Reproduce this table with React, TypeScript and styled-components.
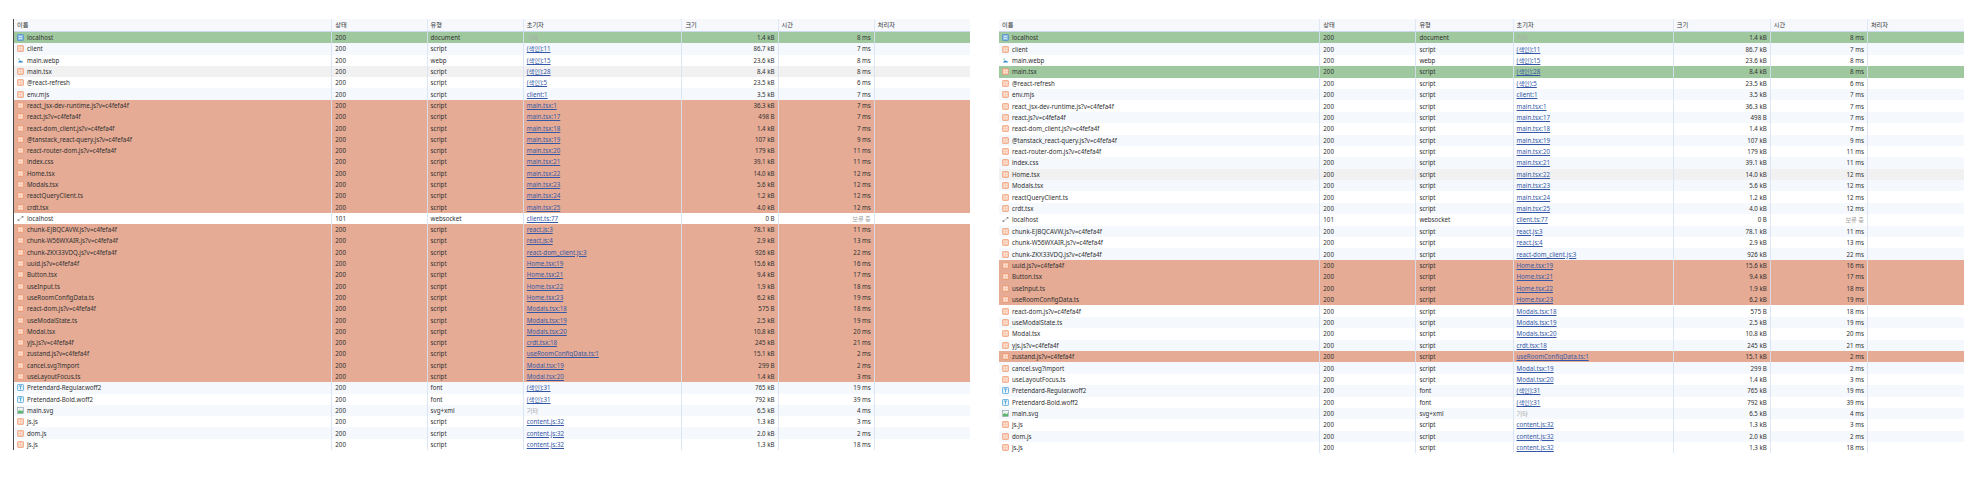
import React from 'react';
import styled, { createGlobalStyle } from 'styled-components';

type Kind = 'doc' | 'script' | 'img' | 'ws' | 'font' | 'svg';
type Tone = 'plain' | 'green' | 'orange' | 'hover';

interface Req {
  name: string;
  status: string;
  type: string;
  initiator: string;
  size: string;
  time: string;
  kind: Kind;
}

const s = (name: string, initiator: string, size: string, time: string): Req => ({
  name,
  status: '200',
  type: 'script',
  initiator,
  size,
  time,
  kind: 'script',
});

const requests: Req[] = [
  { name: 'localhost', status: '200', type: 'document', initiator: '기타', size: '1.4 kB', time: '8 ms', kind: 'doc' },
  s('client', '(색인):11', '86.7 kB', '7 ms'),
  { name: 'main.webp', status: '200', type: 'webp', initiator: '(색인):15', size: '23.6 kB', time: '8 ms', kind: 'img' },
  s('main.tsx', '(색인):28', '8.4 kB', '8 ms'),
  s('@react-refresh', '(색인):5', '23.5 kB', '6 ms'),
  s('env.mjs', 'client:1', '3.5 kB', '7 ms'),
  s('react_jsx-dev-runtime.js?v=c4fefa4f', 'main.tsx:1', '36.3 kB', '7 ms'),
  s('react.js?v=c4fefa4f', 'main.tsx:17', '498 B', '7 ms'),
  s('react-dom_client.js?v=c4fefa4f', 'main.tsx:18', '1.4 kB', '7 ms'),
  s('@tanstack_react-query.js?v=c4fefa4f', 'main.tsx:19', '107 kB', '9 ms'),
  s('react-router-dom.js?v=c4fefa4f', 'main.tsx:20', '179 kB', '11 ms'),
  s('index.css', 'main.tsx:21', '39.1 kB', '11 ms'),
  s('Home.tsx', 'main.tsx:22', '14.0 kB', '12 ms'),
  s('Modals.tsx', 'main.tsx:23', '5.6 kB', '12 ms'),
  s('reactQueryClient.ts', 'main.tsx:24', '1.2 kB', '12 ms'),
  s('crdt.tsx', 'main.tsx:25', '4.0 kB', '12 ms'),
  { name: 'localhost', status: '101', type: 'websocket', initiator: 'client.ts:77', size: '0 B', time: '보류 중', kind: 'ws' },
  s('chunk-EJBQCAVW.js?v=c4fefa4f', 'react.js:3', '78.1 kB', '11 ms'),
  s('chunk-W56WXAIR.js?v=c4fefa4f', 'react.js:4', '2.9 kB', '13 ms'),
  s('chunk-ZKX33VDQ.js?v=c4fefa4f', 'react-dom_client.js:3', '926 kB', '22 ms'),
  s('uuid.js?v=c4fefa4f', 'Home.tsx:19', '15.6 kB', '16 ms'),
  s('Button.tsx', 'Home.tsx:21', '9.4 kB', '17 ms'),
  s('useInput.ts', 'Home.tsx:22', '1.9 kB', '18 ms'),
  s('useRoomConfigData.ts', 'Home.tsx:23', '6.2 kB', '19 ms'),
  s('react-dom.js?v=c4fefa4f', 'Modals.tsx:18', '575 B', '18 ms'),
  s('useModalState.ts', 'Modals.tsx:19', '2.5 kB', '19 ms'),
  s('Modal.tsx', 'Modals.tsx:20', '10.8 kB', '20 ms'),
  s('yjs.js?v=c4fefa4f', 'crdt.tsx:18', '245 kB', '21 ms'),
  s('zustand.js?v=c4fefa4f', 'useRoomConfigData.ts:1', '15.1 kB', '2 ms'),
  s('cancel.svg?import', 'Modal.tsx:19', '299 B', '2 ms'),
  s('useLayoutFocus.ts', 'Modal.tsx:20', '1.4 kB', '3 ms'),
  { name: 'Pretendard-Regular.woff2', status: '200', type: 'font', initiator: '(색인):31', size: '765 kB', time: '19 ms', kind: 'font' },
  { name: 'Pretendard-Bold.woff2', status: '200', type: 'font', initiator: '(색인):31', size: '792 kB', time: '39 ms', kind: 'font' },
  { name: 'main.svg', status: '200', type: 'svg+xml', initiator: '기타', size: '6.5 kB', time: '4 ms', kind: 'svg' },
  s('js.js', 'content.js:32', '1.3 kB', '3 ms'),
  s('dom.js', 'content.js:32', '2.0 kB', '2 ms'),
  s('js.js', 'content.js:32', '1.3 kB', '18 ms'),
];

// row index (0-based) -> highlight colour
const range = (a: number, b: number) => Array.from({ length: b - a + 1 }, (_, i) => a + i);

const leftMarks: Record<number, Tone> = { 0: 'green', 3: 'hover' };
[...range(6, 15), ...range(17, 30)].forEach((i) => (leftMarks[i] = 'orange'));

const rightMarks: Record<number, Tone> = { 0: 'green', 3: 'green', 12: 'hover', 28: 'orange' };
range(20, 23).forEach((i) => (rightMarks[i] = 'orange'));

const headers = ['이름', '상태', '유형', '초기자', '크기', '시간', '처리자'];

const GlobalStyle = createGlobalStyle`
  body {
    margin: 0;
    background: #ffffff;
    font-family: "Noto Sans", "Noto Sans CJK KR", sans-serif;
    color: #303030;
  }
`;

const Page = styled.div`
  display: flex;
  align-items: flex-start;
  gap: 29px;
  padding: 19px 0 0 13px;
  width: 1977px;
  height: 479px;
  box-sizing: border-box;
`;

const Panel = styled.div<{ $w: number; $edge?: boolean }>`
  width: ${(p) => p.$w}px;
  flex: none;
  border-left: ${(p) => (p.$edge ? '1px solid #4a4a4a' : '0')};
  box-sizing: border-box;
`;

const cols = '321fr 96fr 97fr 160fr 97fr 97fr 96fr';

const HeadRow = styled.div`
  display: grid;
  grid-template-columns: ${cols};
  height: 13px;
  background: #f6f8fc;
  border-bottom: 1px solid #cbdaef;
  box-sizing: border-box;
`;

const HeadCell = styled.div`
  font-family: "Noto Sans CJK KR", sans-serif;
  font-size: 6.2px;
  line-height: 12px;
  padding: 0 3px;
  border-right: 1px solid #dfe8f4;
  color: #333;
  white-space: nowrap;
  &:last-child {
    border-right: 0;
  }
`;

const toneBg: Record<Tone, string> = {
  plain: 'transparent',
  green: '#a0c89f',
  orange: '#e5ab95',
  hover: '#f1f1f1',
};

const Row = styled.div<{ $h: number; $tone: Tone; $stripe: boolean }>`
  display: grid;
  grid-template-columns: ${cols};
  height: ${(p) => p.$h}px;
  background: ${(p) => (p.$tone === 'plain' ? (p.$stripe ? '#f5f8fc' : '#ffffff') : toneBg[p.$tone])};
`;

const Cell = styled.div<{ $right?: boolean }>`
  display: flex;
  align-items: center;
  justify-content: ${(p) => (p.$right ? 'flex-end' : 'flex-start')};
  gap: 3px;
  padding: 0 3px;
  font-size: 6.2px;
  white-space: nowrap;
  overflow: hidden;
  border-right: 1px solid rgba(214, 226, 243, 0.85);
  &:last-child {
    border-right: 0;
  }
`;

const NameText = styled.span`
  color: #303030;
`;

const Link = styled.span<{ $muted?: boolean }>`
  color: ${(p) => (p.$muted ? '#a8a8a8' : '#3558a6')};
  text-decoration: ${(p) => (p.$muted ? 'none' : 'underline')};
  font-family: "Noto Sans", "Noto Sans CJK KR", sans-serif;
`;

const Pending = styled.span`
  color: #a0a0a0;
  font-family: "Noto Sans CJK KR", sans-serif;
`;

const IconBox = styled.svg`
  width: 7px;
  height: 7px;
  flex: none;
`;

const Icon = ({ kind }: { kind: Kind }) => {
  switch (kind) {
    case 'doc':
      return (
        <IconBox viewBox="0 0 7 7">
          <rect x="0.5" y="0.5" width="6" height="6" rx="0.8" fill="#8bbde6" stroke="#4b8ac7" strokeWidth="0.7" />
          <path d="M2 2.5h3M2 4.5h3" stroke="#ffffff" strokeWidth="0.6" />
        </IconBox>
      );
    case 'font':
      return (
        <IconBox viewBox="0 0 7 7">
          <rect x="0.5" y="0.5" width="6" height="6" rx="0.8" fill="#e8f4fb" stroke="#3d9bd1" strokeWidth="0.7" />
          <path d="M1.8 2h3.4M3.5 2v3.4" stroke="#3d9bd1" strokeWidth="0.8" />
        </IconBox>
      );
    case 'img':
      return (
        <IconBox viewBox="0 0 7 7">
          <path d="M1 5.5L3 3l1.2 1.4L5 3.6l1 1.9z" fill="#2f86c9" />
          <circle cx="2" cy="2" r="0.7" fill="#49b6a3" />
        </IconBox>
      );
    case 'svg':
      return (
        <IconBox viewBox="0 0 7 7">
          <rect x="0.5" y="0.5" width="6" height="6" fill="#eef2f0" stroke="#8a9aa3" strokeWidth="0.6" />
          <path d="M1 6.2V4.3l1.8-1.3 1.5 1.2L6 3.1v3.1z" fill="#5cb86f" />
        </IconBox>
      );
    case 'ws':
      return (
        <IconBox viewBox="0 0 7 7">
          <path d="M1 5.5l2-2M1 5.5h1.4M1 5.5V4.1M6 1.5l-2 2M6 1.5H4.6M6 1.5v1.4" stroke="#6f6f6f" strokeWidth="0.7" fill="none" />
        </IconBox>
      );
    default:
      return (
        <IconBox viewBox="0 0 7 7">
          <rect x="0.5" y="0.5" width="6" height="6" rx="0.8" fill="#f9c9b1" stroke="#ec8e63" strokeWidth="0.6" />
          <path d="M1.6 2.6h1.3M4.1 2.6h1.3M1.6 4.4h1.3M4.1 4.4h1.3" stroke="#ffffff" strokeWidth="0.7" />
        </IconBox>
      );
  }
};

const Initiator = ({ text }: { text: string }) =>
  text === '기타' ? <Link $muted>{text}</Link> : <Link>{text}</Link>;

const NetworkTable = ({
  width,
  rowH,
  marks,
  edge,
}: {
  width: number;
  rowH: number;
  marks: Record<number, Tone>;
  edge?: boolean;
}) => (
  <Panel $w={width} $edge={edge}>
    <HeadRow>
      {headers.map((h) => (
        <HeadCell key={h}>{h}</HeadCell>
      ))}
    </HeadRow>
    {requests.map((r, i) => (
      <Row key={i} $h={rowH} $tone={marks[i] ?? 'plain'} $stripe={i % 2 === 1}>
        <Cell>
          <Icon kind={r.kind} />
          <NameText>{r.name}</NameText>
        </Cell>
        <Cell>{r.status}</Cell>
        <Cell>{r.type}</Cell>
        <Cell>
          <Initiator text={r.initiator} />
        </Cell>
        <Cell $right>{r.size}</Cell>
        <Cell $right>{r.time === '보류 중' ? <Pending>{r.time}</Pending> : r.time}</Cell>
        <Cell />
      </Row>
    ))}
  </Panel>
);

export default function App() {
  return (
    <>
      <GlobalStyle />
      <Page>
        <NetworkTable width={957} rowH={11.3} marks={leftMarks} edge />
        <NetworkTable width={965} rowH={11.4} marks={rightMarks} />
      </Page>
    </>
  );
}
